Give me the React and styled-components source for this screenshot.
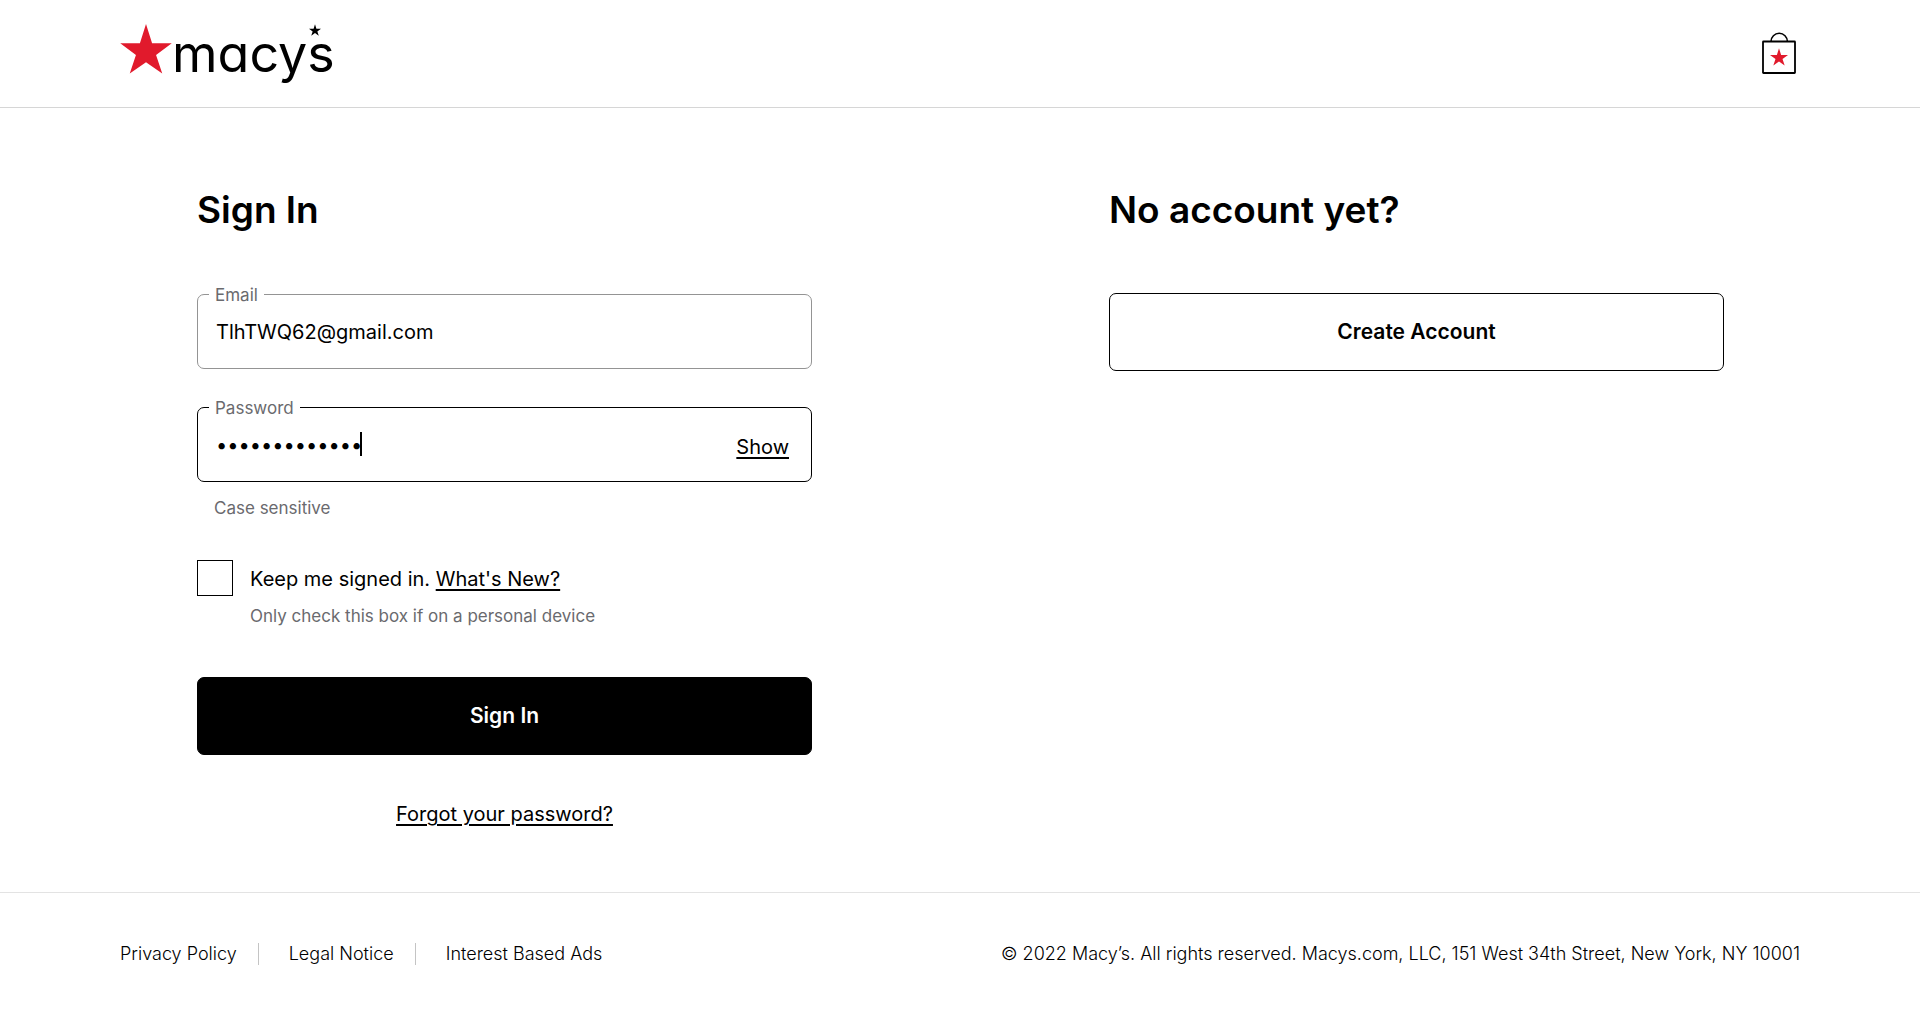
import React, { useState } from "react";
import styled, { createGlobalStyle, css } from "styled-components";

const ink = "#000";
const muted = "#6a6a6e";
const red = "#e11a2c";

const GlobalStyle = createGlobalStyle`
  *, *::before, *::after { box-sizing: border-box; }
  body {
    margin: 0;
    background: #fff;
    color: ${ink};
    font-family: Inter, "Liberation Sans", sans-serif;
    font-size: 20px;
    line-height: 24px;
  }
  input, button { font: inherit; color: inherit; }
`;

const Header = styled.header`
  display: flex;
  align-items: center;
  justify-content: space-between;
  height: 108px;
  padding: 0 120px;
  border-bottom: 1px solid #d6d6d6;
`;

const Logo = styled.a`
  position: relative;
  display: flex;
  align-items: flex-start;
  color: ${ink};
  text-decoration: none;
`;

const LogoName = styled.span`
  font-size: 52px;
  font-weight: 400;
  line-height: 60px;
  font-feature-settings: "cv11";
`;

const Apostrophe = styled.svg`
  position: absolute;
  top: 0;
  right: 14px;
`;

const BagLink = styled.a`
  display: flex;
  padding: 0 4px;
`;

const Main = styled.main`
  display: grid;
  grid-template-columns: 1fr 1fr;
  column-gap: 297px;
  padding: 78px 196px 66px 197px;
`;

const Column = styled.section`
  display: flex;
  flex-direction: column;
`;

const Title = styled.h1`
  margin: 0 0 59px;
  font-size: 37px;
  font-weight: 600;
  line-height: 48px;
`;

const Form = styled.form`
  display: flex;
  flex-direction: column;
  padding-top: 1px;
`;

const Field = styled.div`
  position: relative;
  display: flex;
  align-items: center;
  height: 75px;
  padding: 0 22px 0 18px;
  border: 1px solid ${(p) => (p.$active ? ink : "#949494")};
  border-radius: 7px;

  & + & { margin-top: 38px; }
`;

const FieldLabel = styled.label`
  position: absolute;
  top: -12px;
  left: 11px;
  padding: 0 6px;
  background: #fff;
  color: ${muted};
  font-size: 17px;
`;

const TextInput = styled.input`
  flex: 1;
  min-width: 0;
  height: 40px;
  padding: 0;
  border: 0;
  outline: 0;
  background: transparent;
  caret-color: transparent;
`;

const Caret = styled.span`
  position: absolute;
  top: 24px;
  left: 162px;
  width: 2px;
  height: 24px;
  background: ${ink};
`;

const underlined = css`
  color: ${ink};
  text-decoration: underline;
  text-decoration-thickness: 2px;
  text-underline-offset: 3px;
`;

const ShowButton = styled.button`
  ${underlined}
  padding: 4px 0 0;
  border: 0;
  background: none;
  cursor: pointer;
`;

const TextLink = styled.a`
  ${underlined}
`;

const Hint = styled.p`
  margin: 0;
  color: ${muted};
  font-size: 17px;
`;

const FieldHint = styled(Hint)`
  padding: 14px 17px 0;
`;

const Remember = styled.div`
  display: grid;
  grid-template-columns: 36px 1fr;
  column-gap: 17px;
  row-gap: 8px;
  align-items: center;
  margin: 40px 0 49px;
`;

const RememberText = styled.div`
  padding-top: 2px;
`;

const CheckBox = styled.input`
  appearance: none;
  width: 36px;
  height: 36px;
  margin: 0;
  border: 1px solid ${ink};
  background: #fff;

  &:checked { background: ${ink}; box-shadow: inset 0 0 0 6px #fff; }
`;

const RememberHint = styled(Hint)`
  grid-column: 2;
`;

const ActionButton = styled.button`
  width: 100%;
  height: 78px;
  border: 1px solid ${ink};
  border-radius: 7px;
  background: ${(p) => (p.$primary ? ink : "#fff")};
  color: ${(p) => (p.$primary ? "#fff" : ink)};
  font-size: 21px;
  font-weight: 600;
  cursor: pointer;
`;

const Forgot = styled.div`
  margin-top: 47px;
  text-align: center;
`;

const Footer = styled.footer`
  display: flex;
  align-items: center;
  justify-content: space-between;
  padding: 50px 120px;
  border-top: 1px solid #e3e3e3;
  font-size: 18px;
  font-weight: 350;
  line-height: 22px;
`;

const FooterNav = styled.nav`
  display: flex;
`;

const FooterLink = styled.a`
  color: ${ink};
  text-decoration: none;

  &:not(:last-child) {
    padding-right: 21px;
    border-right: 1px solid #c4c4c4;
  }
  & + & { padding-left: 30px; }
`;

const Copyright = styled.p`
  margin: 0;
`;

const STAR =
  "50,0 61.8,37.2 100,37.2 69.5,60 81.5,96 50,74 18.5,96 30.5,60 0,37.2 38.2,37.2";

function BagIcon() {
  return (
    <svg width="34" height="44" viewBox="0 0 34 44" aria-hidden="true">
      <path d="M9 9.5a8.2 8.2 0 0 1 16.4 0" fill="none" stroke="#000" strokeWidth="1.6" />
      <rect x="1" y="9.5" width="32" height="31.5" rx="0.5" fill="#fff" stroke="#000" strokeWidth="1.8" />
      <svg x="8" y="16" width="18" height="18" viewBox="0 0 100 97">
        <polygon points={STAR} fill={red} />
      </svg>
    </svg>
  );
}

export default function App() {
  const [shown, setShown] = useState(false);

  return (
    <>
      <GlobalStyle />
      <Header>
        <Logo href="#home" aria-label="macy's">
          <svg width="52" height="50" viewBox="0 0 100 97" aria-hidden="true">
            <polygon points={STAR} fill={red} />
          </svg>
          <LogoName>macys</LogoName>
          <Apostrophe width="12" height="12" viewBox="0 0 100 97" aria-hidden="true">
            <polygon points={STAR} fill="#000" />
          </Apostrophe>
        </Logo>
        <BagLink href="#bag" aria-label="Shopping bag">
          <BagIcon />
        </BagLink>
      </Header>
      <Main>
        <Column>
          <Title>Sign In</Title>
          <Form onSubmit={(e) => e.preventDefault()}>
            <Field>
              <FieldLabel htmlFor="email">Email</FieldLabel>
              <TextInput id="email" type="email" defaultValue="TlhTWQ62@gmail.com" />
            </Field>
            <Field $active>
              <FieldLabel htmlFor="password">Password</FieldLabel>
              <TextInput
                id="password"
                type={shown ? "text" : "password"}
                defaultValue="abcdefghijklm"
              />
              <Caret />
              <ShowButton type="button" onClick={() => setShown(!shown)}>
                Show
              </ShowButton>
            </Field>
            <FieldHint>Case sensitive</FieldHint>
            <Remember>
              <CheckBox id="remember" type="checkbox" />
              <RememberText>
                <label htmlFor="remember">Keep me signed in.</label>{" "}
                <TextLink href="#whats-new">What's New?</TextLink>
              </RememberText>
              <RememberHint>Only check this box if on a personal device</RememberHint>
            </Remember>
            <ActionButton $primary type="submit">
              Sign In
            </ActionButton>
            <Forgot>
              <TextLink href="#forgot">Forgot your password?</TextLink>
            </Forgot>
          </Form>
        </Column>
        <Column>
          <Title as="h2">No account yet?</Title>
          <ActionButton type="button">Create Account</ActionButton>
        </Column>
      </Main>
      <Footer>
        <FooterNav>
          <FooterLink href="#privacy">Privacy Policy</FooterLink>
          <FooterLink href="#legal">Legal Notice</FooterLink>
          <FooterLink href="#ads">Interest Based Ads</FooterLink>
        </FooterNav>
        <Copyright>
          © 2022 Macy’s. All rights reserved. Macys.com, LLC, 151 West 34th Street, New York, NY 10001
        </Copyright>
      </Footer>
    </>
  );
}
